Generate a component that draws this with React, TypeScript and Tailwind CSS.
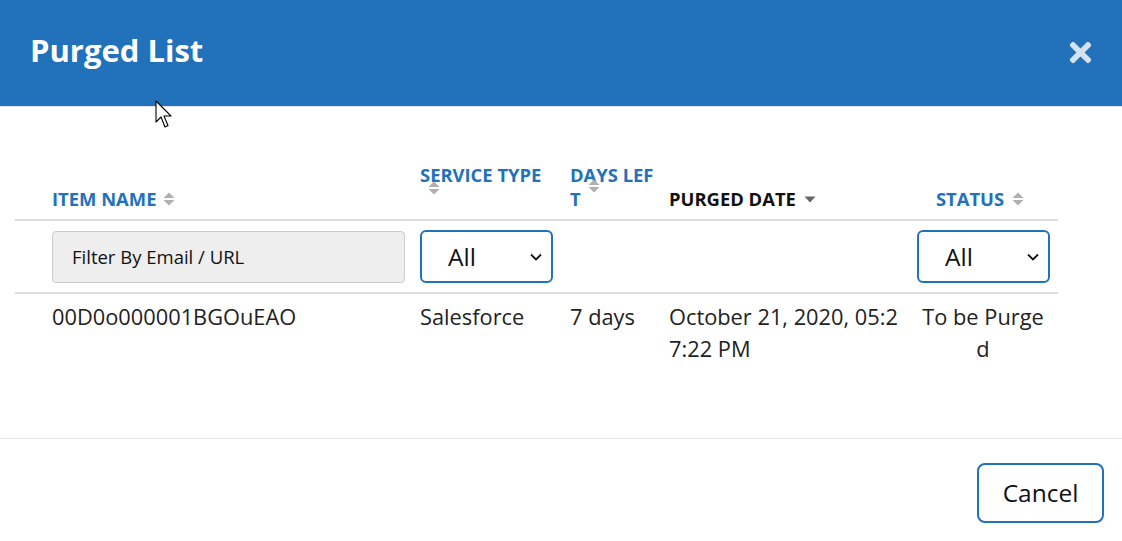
import { FaTimes } from 'react-icons/fa'

const blue = '#2271bb'

function SortIcon({ className = '' }: { className?: string }) {
  return (
    <svg width="12" height="14" viewBox="0 0 12 14" className={className}>
      <path d="M0.5 6 L6 0.5 L11.5 6 Z" fill="#b0b0b0" />
      <path d="M0.5 8 L11.5 8 L6 13.5 Z" fill="#b0b0b0" />
    </svg>
  )
}

function Chevron() {
  return (
    <svg width="12" height="8" viewBox="0 0 12 8" className="absolute right-[9px] top-1/2 -translate-y-1/2">
      <polyline points="1,1.5 6,6.5 11,1.5" fill="none" stroke="#111" strokeWidth="1.8" />
    </svg>
  )
}

function SelectBox({ value }: { value: string }) {
  return (
    <div className="relative h-[53px] w-[133px] rounded-[6px] border-2 border-[#2271bb] bg-white pl-[26px] text-[24.5px] leading-[49px] text-[#111]">
      {value}
      <Chevron />
    </div>
  )
}

function Cursor() {
  return (
    <svg width="20" height="30" viewBox="0 0 20 30" className="absolute left-[155px] top-[100px]">
      <path d="M1 1 L1 22 L6 17 L10 27 L13 25.5 L9 16 L16 16 Z" fill="#fff" stroke="#000" strokeWidth="1.1" strokeLinejoin="round" />
    </svg>
  )
}

export default function App() {
  return (
    <div className="relative w-[1122px] h-[541px] bg-white overflow-hidden" style={{ fontFamily: '"Open Sans", sans-serif' }}>
      {/* header */}
      <div className="h-[107px] bg-[#2271bb] border-b border-[#dfe3e8] flex items-center justify-between pl-[30px] pr-[26px]">
        <h1 className="text-[31px] font-bold text-white leading-none -mt-[6px]">Purged List</h1>
        <FaTimes className="text-[#d5e3f0] -mt-[2px]" size={31} />
      </div>

      {/* body */}
      <div className="h-[331px] pt-[56px]">
        <div className="ml-[15px] w-[1043px]">
          {/* column headers */}
          <div className="grid grid-cols-[390px_150px_99px_250px_154px] items-end border-b-2 border-[#dddddd] pb-[8px] text-[18.4px] font-bold uppercase leading-[24px]" style={{ color: blue }}>
            <div className="pl-[37px] flex items-center gap-[7px]">
              <span>Item Name</span>
              <SortIcon />
            </div>
            <div className="pl-[15px] self-start">
              <div>Service Type</div>
              <SortIcon className="block ml-[8px] -mt-[6px]" />
            </div>
            <div className="pl-[15px] w-[99px] break-all">
              Days Lef<span className="whitespace-nowrap">t<SortIcon className="inline-block align-baseline ml-[7px] relative -top-[13px]" /></span>
            </div>
            <div className="pl-[15px] flex items-center gap-[8px] text-[#111]">
              <span>Purged Date</span>
              <svg width="12" height="7" viewBox="0 0 12 7">
                <path d="M0.5 0.5 L11.5 0.5 L6 6.5 Z" fill="#666" />
              </svg>
            </div>
            <div className="pl-[13px] pr-[15px] flex items-center justify-center gap-[8px]">
              <span>Status</span>
              <SortIcon />
            </div>
          </div>

          {/* filters */}
          <div className="grid grid-cols-[390px_150px_99px_250px_154px] items-center h-[73px] border-b-2 border-[#dddddd]">
            <div className="pl-[37px]">
              <input
                placeholder="Filter By Email / URL"
                className="h-[52px] w-[353px] rounded-[4px] border border-[#cccccc] bg-[#eeeeee] px-[19px] text-[18.5px] text-[#111] placeholder:text-[#111] outline-none"
              />
            </div>
            <div className="pl-[15px]">
              <SelectBox value="All" />
            </div>
            <div />
            <div />
            <div className="pl-[13px]">
              <SelectBox value="All" />
            </div>
          </div>

          {/* data row */}
          <div className="grid grid-cols-[390px_150px_99px_250px_154px] items-start pt-[7px] text-[21.8px] leading-[32px] text-[#222]">
            <div className="pl-[37px]">00D0o000001BGOuEAO</div>
            <div className="pl-[15px]">Salesforce</div>
            <div className="pl-[15px]">7 days</div>
            <div className="pl-[15px] break-all">October 21, 2020, 05:27:22 PM</div>
            <div className="pl-[15px] pr-[11px] text-center break-all">To be Purged</div>
          </div>
        </div>
      </div>

      {/* footer */}
      <div className="border-t border-[#e5e5e5] flex justify-end pt-[24px] pr-[18px]">
        <button className="h-[60px] w-[127px] rounded-[8px] border-2 border-[#2271bb] bg-white text-[24.5px] text-[#111]">
          Cancel
        </button>
      </div>

      <Cursor />
    </div>
  )
}
